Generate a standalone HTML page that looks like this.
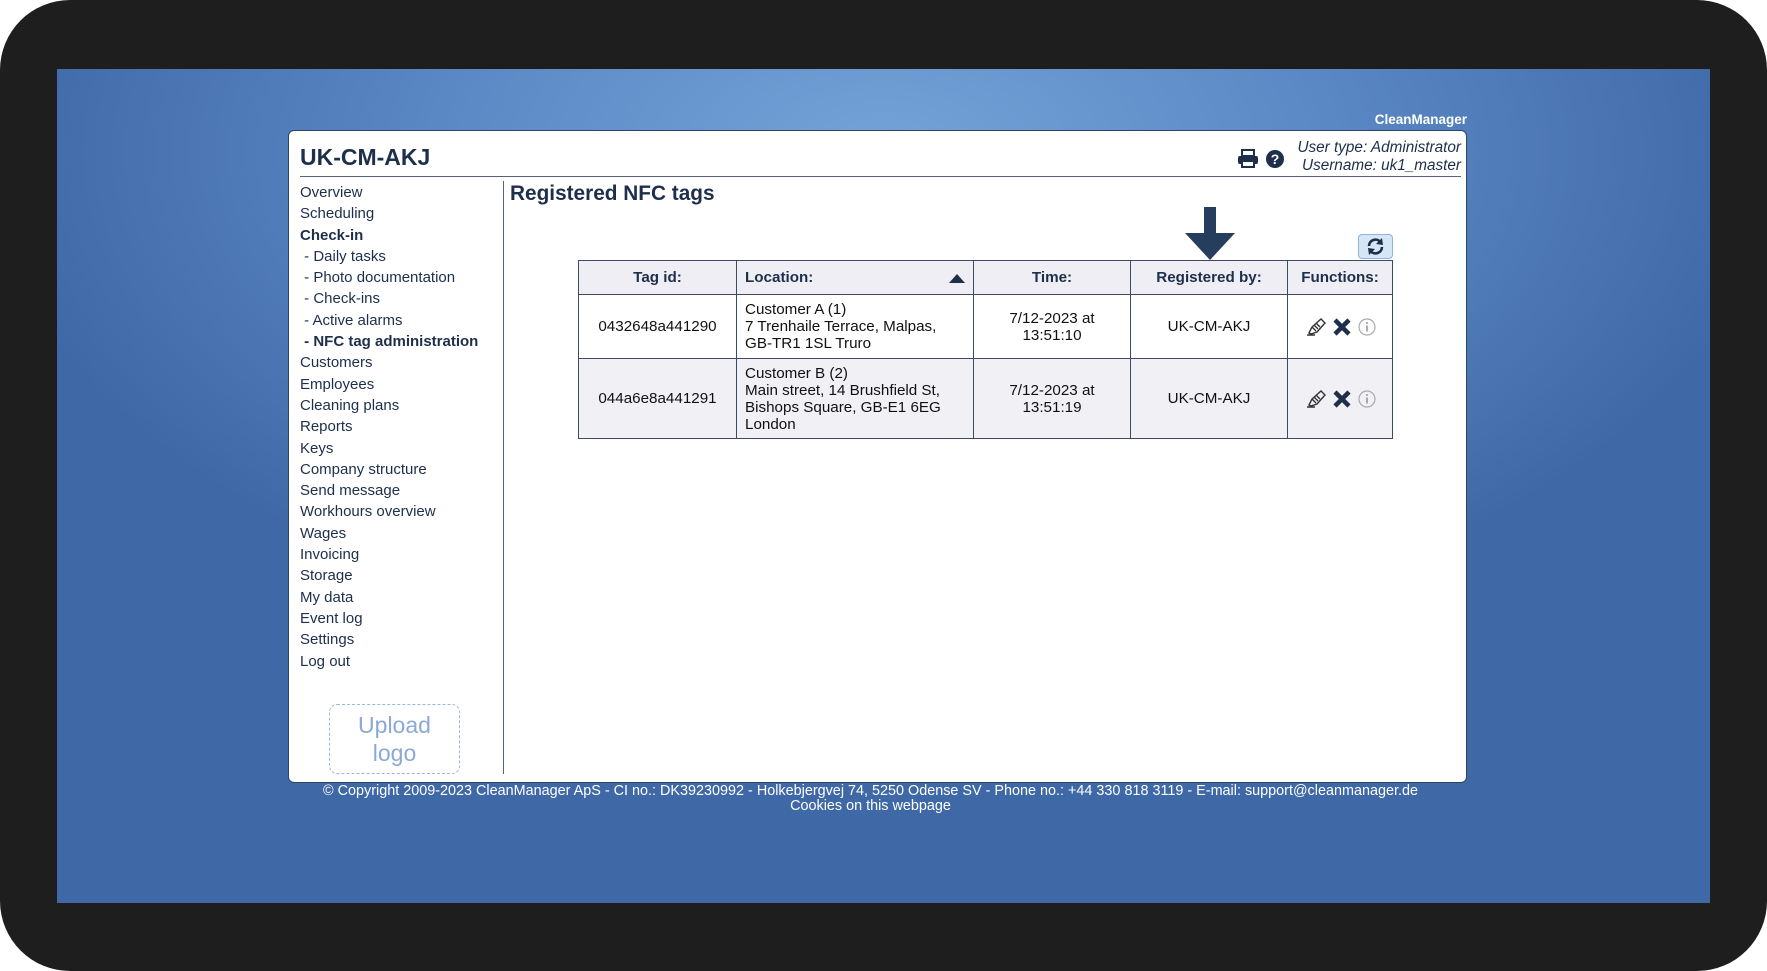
<!DOCTYPE html>
<html><head><style>
*{margin:0;padding:0;box-sizing:border-box}
body{width:1767px;height:971px;background:#fff;overflow:hidden;font-family:"Liberation Sans",sans-serif;position:relative}
#outer{position:absolute;left:0;top:0;width:1767px;height:971px;background:#1e1e1e;border-radius:70px}
#screen{position:absolute;left:57px;top:69px;width:1653px;height:834px;background:radial-gradient(ellipse 900px 500px at 50% 10%,#74a3d8 0%,#5a88c4 50%,#3f68a6 100%)}
#cm{position:absolute;right:243px;top:43px;color:#fff;font-weight:bold;font-size:13.5px}
#panel{position:absolute;left:231px;top:61px;width:1179px;height:653px;background:#fff;border:1px solid #2d4668;border-radius:6px}
#title{position:absolute;left:11px;top:13px;font-size:23px;font-weight:bold;color:#1d2f4a}
#hline{position:absolute;left:11px;right:5px;top:45px;border-top:1px solid #56627a}
#user{position:absolute;right:5px;top:8px;text-align:right;font-style:italic;font-size:15.3px;color:#1d2f4a;line-height:18px}
#nav{position:absolute;left:11px;top:51px;font-size:15px;color:#1d2f4a;line-height:21.3px}
#nav b{font-weight:bold}
#vline{position:absolute;left:214px;top:50px;height:593px;border-left:1px solid #56627a}
h1{position:absolute;left:221px;top:51px;font-size:20.8px;color:#1d2f4a}
table{position:absolute;left:289px;top:129px;border-collapse:collapse;font-size:15.2px;color:#111}
td,th{border:1px solid #3b4b66;text-align:center;padding:0 8px}
th{background:#eeeef4;height:34px;font-weight:bold;color:#1d2f4a}
tr.r1 td{background:#fff;height:64px}
tr.r2 td{background:#f0f0f5;height:80px}
td.l,th.l{text-align:left}
#upload{position:absolute;left:40px;top:573px;width:131px;height:70px;border:1px dashed #9ab6da;border-radius:8px;color:#8aa9d6;font-size:23px;text-align:center;line-height:28px;padding-top:6px}
#foot{position:absolute;left:-13px;width:1653px;top:715px;text-align:center;color:#fff;font-size:14.4px;line-height:15px}
.ic{vertical-align:middle;margin:0 3px}
</style></head><body>
<div id="outer"></div>
<div id="screen">
<div id="cm">CleanManager</div>
<div id="panel">
<div id="title">UK-CM-AKJ</div>
<svg style="position:absolute;left:948px;top:18px" width="22" height="20" viewBox="0 0 22 20"><rect x="5" y="1" width="12" height="6" fill="none" stroke="#1d2f4a" stroke-width="2"/><rect x="1" y="7" width="20" height="8" rx="2" fill="#1d2f4a"/><rect x="5" y="12" width="12" height="6" fill="#fff" stroke="#1d2f4a" stroke-width="2"/></svg>
<svg style="position:absolute;left:976px;top:18px" width="20" height="20" viewBox="0 0 20 20"><circle cx="10" cy="10" r="9" fill="#1d2f4a"/><text x="10" y="15" text-anchor="middle" font-size="14" font-weight="bold" fill="#fff" font-family="Liberation Sans">?</text></svg>
<div id="user">User type: Administrator<br>Username: uk1_master</div>
<div id="hline"></div>
<div id="nav">Overview<br>Scheduling<br><b>Check-in</b><br>&nbsp;- Daily tasks<br>&nbsp;- Photo documentation<br>&nbsp;- Check-ins<br>&nbsp;- Active alarms<br>&nbsp;<b>- NFC tag administration</b><br>Customers<br>Employees<br>Cleaning plans<br>Reports<br>Keys<br>Company structure<br>Send message<br>Workhours overview<br>Wages<br>Invoicing<br>Storage<br>My data<br>Event log<br>Settings<br>Log out</div>
<div id="vline"></div>
<div id="upload">Upload<br>logo</div>
<h1>Registered NFC tags</h1>
<svg style="position:absolute;left:895px;top:76px" width="52" height="54" viewBox="0 0 52 54"><rect x="20" y="0" width="12" height="28" fill="#263d5e"/><polygon points="1,26 51,26 26,53" fill="#263d5e"/></svg>
<div style="position:absolute;left:1069px;top:103px;width:35px;height:25px;background:#d6e6f7;border:1px solid #8fb3dc;border-radius:4px"><svg width="33" height="23" viewBox="0 0 33 23"><path d="M10 11a6.5 6.5 0 0 1 11.5-4" fill="none" stroke="#1d2f4a" stroke-width="2.6"/><polygon points="23,3 24,10 17,9" fill="#1d2f4a"/><path d="M23 12a6.5 6.5 0 0 1-11.5 4" fill="none" stroke="#1d2f4a" stroke-width="2.6"/><polygon points="10,20 9,13 16,14" fill="#1d2f4a"/></svg></div>
<table>
<tr><th style="width:158px">Tag id:</th><th class="l" style="width:237px">Location: <svg style="float:right;margin-top:4px" width="16" height="10" viewBox="0 0 16 10"><polygon points="0,10 16,10 8,1" fill="#1d2f4a"/></svg></th><th style="width:157px">Time:</th><th style="width:157px">Registered by:</th><th style="width:105px">Functions:</th></tr>
<tr class="r1"><td>0432648a441290</td><td class="l">Customer A (1)<br>7 Trenhaile Terrace, Malpas,<br>GB-TR1 1SL Truro</td><td>7/12-2023 at<br>13:51:10</td><td>UK-CM-AKJ</td><td>
<svg class="ic" width="22" height="18" viewBox="0 0 22 18"><path d="M3 17h8M5 15l3-6 9-8 4 4-8 9-6 2zM8 9l4 4M10 7l4 4M12 5l4 4" fill="none" stroke="#333" stroke-width="1.4"/></svg><svg class="ic" width="20" height="20" viewBox="0 0 20 20"><path d="M3 3l14 14M17 3L3 17" stroke="#1d2f4a" stroke-width="4.5"/></svg><svg class="ic" width="18" height="18" viewBox="0 0 18 18"><circle cx="9" cy="9" r="8" fill="none" stroke="#aaa" stroke-width="1.2"/><rect x="8.2" y="7.5" width="1.6" height="6" fill="#999"/><circle cx="9" cy="5" r="1" fill="#999"/></svg></td></tr>
<tr class="r2"><td>044a6e8a441291</td><td class="l">Customer B (2)<br>Main street, 14 Brushfield St,<br>Bishops Square, GB-E1 6EG<br>London</td><td>7/12-2023 at<br>13:51:19</td><td>UK-CM-AKJ</td><td>
<svg class="ic" width="22" height="18" viewBox="0 0 22 18"><path d="M3 17h8M5 15l3-6 9-8 4 4-8 9-6 2zM8 9l4 4M10 7l4 4M12 5l4 4" fill="none" stroke="#333" stroke-width="1.4"/></svg><svg class="ic" width="20" height="20" viewBox="0 0 20 20"><path d="M3 3l14 14M17 3L3 17" stroke="#1d2f4a" stroke-width="4.5"/></svg><svg class="ic" width="18" height="18" viewBox="0 0 18 18"><circle cx="9" cy="9" r="8" fill="none" stroke="#aaa" stroke-width="1.2"/><rect x="8.2" y="7.5" width="1.6" height="6" fill="#999"/><circle cx="9" cy="5" r="1" fill="#999"/></svg></td></tr>
</table>
</div>
<div id="foot">© Copyright 2009-2023 CleanManager ApS - CI no.: DK39230992 - Holkebjergvej 74, 5250 Odense SV - Phone no.: +44 330 818 3119 - E-mail: support@cleanmanager.de<br>Cookies on this webpage</div>
</div>
</body></html>
